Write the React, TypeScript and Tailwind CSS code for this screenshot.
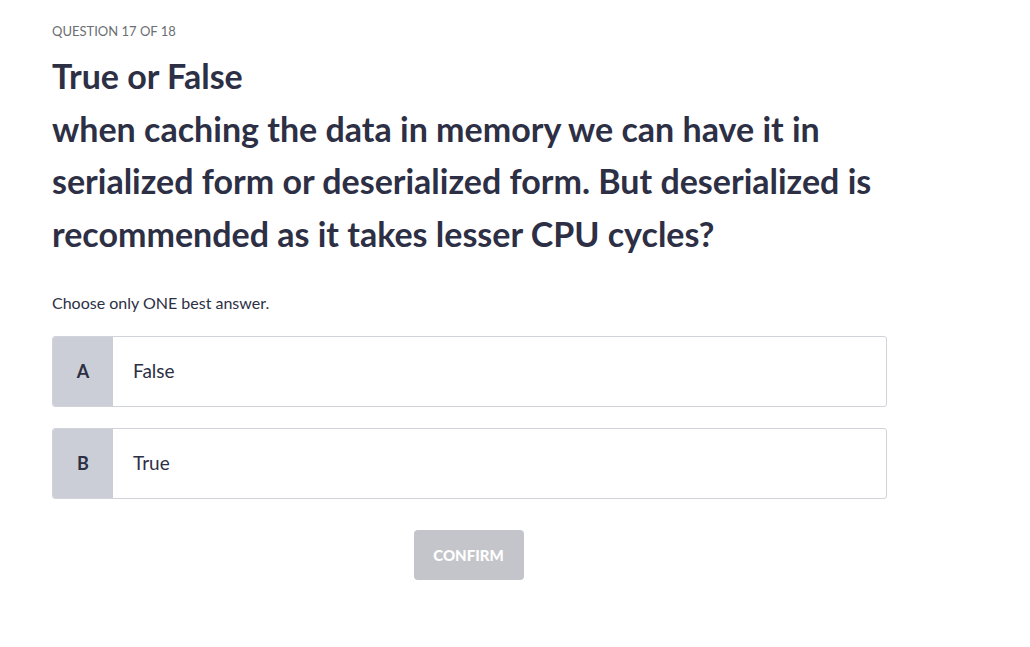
const options = [
  { key: "A", label: "False" },
  { key: "B", label: "True" },
];

export default function App() {
  return (
    <div
      className="min-h-screen bg-white text-[#2d2f45]"
      style={{ fontFamily: "Lato, 'Noto Sans', sans-serif" }}
    >
      <div className="pl-[52px] pt-[22px] w-[887px]">
        {/* Header */}
        <p className="text-[13px] leading-[18px] text-[#6a6f73] uppercase">
          Question 17 of 18
        </p>
        <h1 className="mt-[10px] text-[34px] leading-[52.5px] font-bold">
          True or False
          <br />
          when caching the data in memory we can have it in
          <br />
          serialized form or deserialized form. But deserialized is
          <br />
          recommended as it takes lesser CPU cycles?
        </h1>

        <p className="mt-[33px] text-[16px] leading-[20px]">
          Choose only ONE best answer.
        </p>

        {/* Options */}
        <div className="mt-[23px] flex flex-col gap-[21px]">
          {options.map((o) => (
            <div
              key={o.key}
              className="flex h-[71px] border border-[#d1d3da] rounded-[3px] overflow-hidden cursor-pointer"
            >
              <div className="w-[60px] bg-[#cbced6] flex items-center justify-center text-[18px] font-bold">
                {o.key}
              </div>
              <div className="flex-1 flex items-center pl-[20px] text-[19px]">
                {o.label}
              </div>
            </div>
          ))}
        </div>

        <div className="mt-[31px] flex justify-center pr-[2px]">
          <button className="w-[110px] h-[50px] rounded-[4px] bg-[#c4c5ca] text-white text-[15px] font-black uppercase">
            Confirm
          </button>
        </div>
      </div>
    </div>
  );
}
